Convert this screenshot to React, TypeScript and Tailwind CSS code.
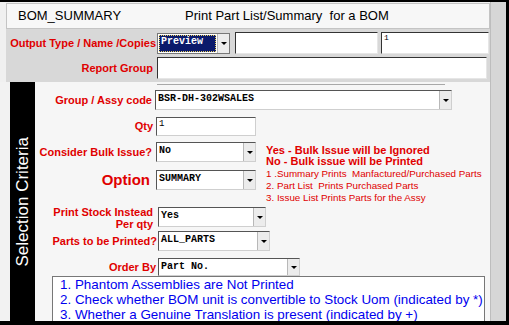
import React from "react";

const F = { fontFamily: '"Liberation Sans", Arial, sans-serif' };
const M = { fontFamily: '"Liberation Mono", "Courier New", monospace' };

function Arrow() {
  return (
    <div className="flex h-full w-[12px] shrink-0 items-center justify-center border-l border-[#b8b8b8] bg-[#ececec]">
      <div className="h-0 w-0 border-x-[3px] border-t-[3px] border-x-transparent border-t-black" />
    </div>
  );
}

function Select({ value, cls }: { value: string; cls: string }) {
  return (
    <div className={`flex shrink-0 items-stretch border border-t-[#555] border-l-[#555] border-b-[#cfcfcf] border-r-[#cfcfcf] bg-white ${cls}`}>
      <div className="flex-1 overflow-hidden whitespace-nowrap pl-[2px] pt-[2px] text-[10px] font-bold leading-[12px] text-black" style={M}>
        {value}
      </div>
      <Arrow />
    </div>
  );
}

export default function App() {
  return (
    <div className="flex h-[325px] w-[509px] overflow-hidden border-t-2 border-r-[3px] border-b-4 border-black bg-[#f0f0f0]" style={F}>
      <div className="flex w-[490px] shrink-0 flex-col">
        {/* title */}
        <div className="ml-[6px] mt-px flex h-[26px] shrink-0 items-center border border-[#c4c4c4] bg-[#f7f7f7] text-[13px] text-black">
          <span className="pl-[11px]">BOM_SUMMARY</span>
          <span className="pl-[64px]">Print Part List/Summary&nbsp; for a BOM</span>
        </div>
        {/* gray header area */}
        <div className="ml-[6px] flex h-[53px] shrink-0 flex-col bg-[#d8d8d8]">
          <div className="mt-[3px] flex h-[22px] items-center">
            <div className="w-[150px] text-right text-[11px] font-bold text-[#e00000]">Output Type / Name /Copies</div>
            <div className="ml-[1px] flex h-[21px] w-[73px] items-stretch border border-[#777] bg-white">
              <div className="m-px flex-1 border border-dotted border-[#e8d060] bg-[#0b1a6b] pl-px text-[10px] font-bold leading-[12px] text-white" style={M}>
                Preview
              </div>
              <Arrow />
            </div>
            <div className="ml-[5px] h-[22px] w-[143px] border border-t-[#333] border-l-[#333] border-b-[#e6e6e6] border-r-[#e6e6e6] bg-white" />
            <div className="ml-[3px] h-[22px] w-[108px] border border-t-[#333] border-l-[#333] border-b-[#e6e6e6] border-r-[#e6e6e6] bg-white pl-[2px] text-[8px] leading-[10px]" style={M}>
              1
            </div>
          </div>
          <div className="mt-[3px] flex h-[22px] items-center">
            <div className="w-[147px] text-right text-[11px] font-bold text-[#e00000]">Report Group</div>
            <div className="ml-[4px] h-[22px] w-[330px] border border-t-[#333] border-l-[#333] border-b-[#e6e6e6] border-r-[#e6e6e6] bg-white" />
          </div>
        </div>
        {/* selection area */}
        <div className="flex flex-1 bg-[#f2f2f2]">
          <div className="ml-[10px] flex w-[25px] shrink-0 items-center justify-center bg-black">
            <div className="-rotate-90 whitespace-nowrap text-[17px] text-white">Selection Criteria</div>
          </div>
          <div className="flex flex-1 flex-col bg-[#f6f6f6]">
            <div className="ml-[122px] mt-[2px] h-px w-[288px] bg-[#a8a8a8]" />
            {/* group */}
            <div className="mt-[5px] flex h-[20px] items-center">
              <div className="w-[117px] text-right text-[11px] font-bold text-[#e00000]">Group / Assy code</div>
              <Select value="BSR-DH-302WSALES" cls="ml-[3px] h-[20px] w-[297px]" />
            </div>
            {/* qty */}
            <div className="mt-[7px] flex h-[19px] items-center">
              <div className="w-[118px] text-right text-[11px] font-bold text-[#e00000]">Qty</div>
              <div className="ml-[3px] h-[19px] w-[100px] border border-t-[#555] border-l-[#555] border-b-[#cfcfcf] border-r-[#cfcfcf] bg-white pl-[2px] pt-[1px] text-[9px] leading-[10px]" style={M}>
                1
              </div>
            </div>
            {/* bulk + option with notes */}
            <div className="mt-[6px] flex h-[48px]">
              <div className="flex flex-col">
                <div className="flex h-[20px] items-center">
                  <div className="w-[117px] text-right text-[11px] font-bold text-[#e00000]">Consider Bulk Issue?</div>
                  <Select value="No" cls="ml-[4px] h-[20px] w-[100px]" />
                </div>
                <div className="mt-[8px] flex h-[20px] items-center">
                  <div className="w-[115px] text-right text-[15px] font-bold text-[#e00000]">Option</div>
                  <Select value="SUMMARY" cls="ml-[6px] h-[20px] w-[100px]" />
                </div>
              </div>
              <div className="ml-[10px] flex h-[48px] flex-col overflow-visible pt-[3px] text-[#e00000]">
                <div className="text-[11px] font-bold leading-[11px]">Yes - Bulk Issue will be Ignored</div>
                <div className="text-[11px] font-bold leading-[11px]">No - Bulk issue will be Printed</div>
                <div className="mt-px shrink-0 text-[9.8px] leading-[12px]">1 .Summary Prints&nbsp; Manfactured/Purchased Parts</div>
                <div className="shrink-0 text-[9.8px] leading-[12px]">2. Part List&nbsp; Prints Purchased Parts</div>
                <div className="shrink-0 text-[9.8px] leading-[12px]">3. Issue List Prints Parts for the Assy</div>
              </div>
            </div>
            {/* print stock */}
            <div className="mt-[17px] flex h-[20px] items-start">
              <div className="-mt-[1px] w-[118px] text-right text-[11px] font-bold leading-[12px] text-[#e00000]">
                Print Stock Instead
                <br />
                Per qty
              </div>
              <Select value="Yes" cls="ml-[5px] h-[20px] w-[108px]" />
            </div>
            {/* parts */}
            <div className="mt-[4px] flex h-[20px] items-center">
              <div className="w-[122px] text-right text-[11px] font-bold text-[#e00000]">Parts to be Printed?</div>
              <Select value="ALL_PARTS" cls="ml-[1px] h-[20px] w-[112px]" />
            </div>
            {/* order by */}
            <div className="mt-[7px] flex h-[18px] items-center">
              <div className="w-[121px] text-right text-[11px] font-bold text-[#e00000]">Order By</div>
              <Select value="Part No." cls="ml-[2px] h-[18px] w-[142px]" />
            </div>
            {/* notes */}
            <div className="ml-[17px] w-[433px] flex-1 overflow-hidden whitespace-nowrap border border-b-0 border-[#777] bg-white pl-[7px] text-[13.4px] leading-[15px] text-[#0000ee]">
              <div>1. Phantom Assemblies are Not Printed</div>
              <div>2. Check whether BOM unit is convertible to Stock Uom (indicated by *)</div>
              <div>3. Whether a Genuine Translation is present (indicated by +)</div>
            </div>
          </div>
        </div>
      </div>
      <div className="flex-1 border-l border-[#bdbdbd] bg-[#d6d6d6]" />
    </div>
  );
}
